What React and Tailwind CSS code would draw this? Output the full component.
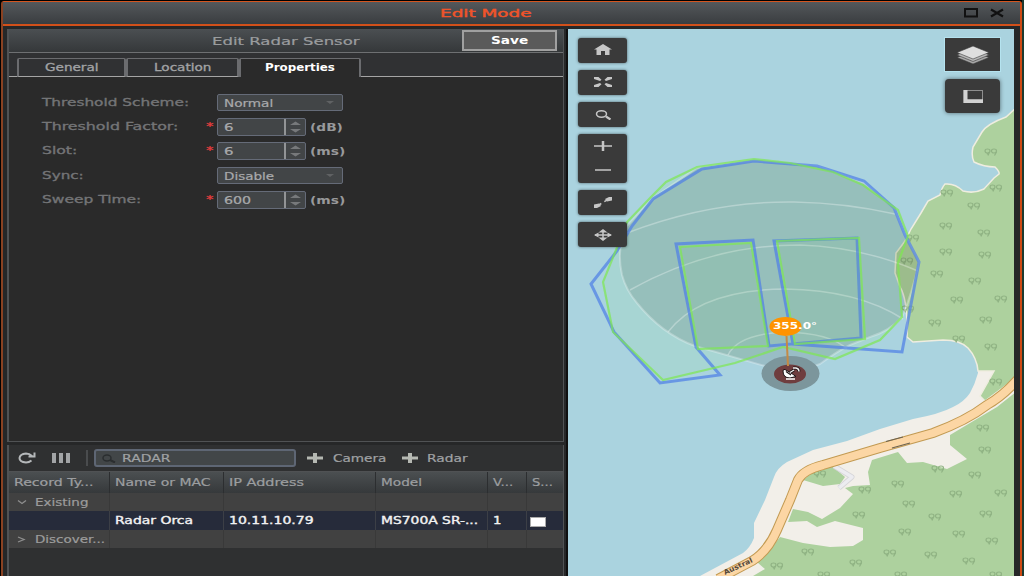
import React, { useLayoutEffect, useRef } from "react";

// Wide-set text: the label is stretched horizontally to fill the given width.
function T({ w, className = "", children }) {
  const ref = useRef(null);
  useLayoutEffect(() => {
    const el = ref.current;
    el.style.transform = `scaleX(${w / el.offsetWidth})`;
  }, [w, children]);
  return (
    <span className="inline-block shrink-0 whitespace-nowrap" style={{ width: w }}>
      <span ref={ref} className={`inline-block origin-left ${className}`}>{children}</span>
    </span>
  );
}

function Tab({ w, textW, active, children }) {
  return (
    <div
      style={{ width: w }}
      className={
        "flex h-[19px] items-center justify-center rounded-t-[2px] border-x-2 border-t border-[#6b6c6f] text-[10px] " +
        (active ? "bg-[#2a2a2a] pb-px text-white" : "border-b border-b-[#a5a5a5] bg-[#303133] text-[#a2a3a5]")
      }
    >
      <T w={textW} className={active ? "font-bold" : "[-webkit-text-stroke:0.300px]"}>{children}</T>
    </div>
  );
}

function Select({ value, w }) {
  return (
    <div className="flex h-[17px] w-[126px] items-center justify-between rounded-[2px] border border-[#656b78] bg-[#424547] pr-2 pl-[6px] text-[10px] text-[#a9aaac] [-webkit-text-stroke:0.200px]">
      <span className="flex translate-y-px"><T w={w}>{value}</T></span>
      <svg className="h-[3px] w-[8px]" viewBox="0 0 8 3"><path d="M0 0h8L4 3z" fill="#606264" /></svg>
    </div>
  );
}

function Spinner({ value, w, unit, unitW }) {
  return (
    <div className="flex items-center">
      <div className="flex h-[18px] w-[89px] rounded-[2px] border border-[#656b78] bg-[#424547] text-[10px] text-[#a9aaac] [-webkit-text-stroke:0.200px]">
        <div className="flex w-[68px] items-center border-r-2 border-[#929496] pt-px pl-[6px]"><T w={w}>{value}</T></div>
        <svg className="h-4 w-[19px]" viewBox="0 0 19 16">
          <path d="M4 6h11L9.500 2.500z M4 10h11L9.500 13.500z" fill="#77797b" />
        </svg>
      </div>
      <div className="ml-[4px] flex translate-y-px text-[10px] font-bold text-[#98999b]"><T w={unitW}>{unit}</T></div>
    </div>
  );
}

function Row({ label, w, required, children }) {
  return (
    <div className="flex h-[24.400px] items-center">
      <div className="flex w-[164px] pl-px text-[10px] text-[#747577] [-webkit-text-stroke:0.300px]"><T w={w}>{label}</T></div>
      <div className="flex h-[14px] w-[12px] text-[11px] leading-[14px] font-bold text-[#e03c3c]">{required && <span className="ml-px flex"><T w={8}>*</T></span>}</div>
      {children}
    </div>
  );
}

function MapButton({ h = "h-[25px]", children }) {
  return (
    <div className={`flex ${h} w-[49px] flex-col items-center justify-center rounded-[3px] bg-[#3a3a3a] shadow-[0_0_3px_rgba(0,0,0,0.550)]`}>
      {children}
    </div>
  );
}

const trees = [
  [991, 152], [947, 193], [996, 188], [974, 206], [946, 226], [984, 233], [913, 238], [946, 252], [985, 255],
  [907, 261], [937, 274], [975, 281], [957, 300], [1001, 299], [935, 323], [986, 320], [959, 339], [991, 347],
  [908, 309], [996, 382], [983, 428], [985, 450], [975, 475], [938, 469], [1001, 493], [956, 494], [898, 484],
  [865, 490], [909, 504], [859, 515], [935, 517], [986, 514], [905, 532], [959, 534], [992, 541], [808, 552],
  [890, 553], [931, 555], [969, 561], [856, 563], [777, 566], [824, 575], [996, 575], [901, 575], [820, 474],
];

const road = "M1018 379 Q1003 396 987 405 Q966 421 933 433 L880 448 L823 465 Q803 470 798 480 L790 500 L777 530 Q768 551 752 561 L718 579";
const greenZone = "754,159 697,167 666,182 651,197 627,222 616,250 603,282 613,332 663,380 735,363 783,347 835,359 880,340 902,317 898,263 908,236 898,210 863,185 833,172 790,163";

function MapView() {
  return (
    <svg className="block h-[547px] w-[446px]" viewBox="568 29 446 547">
      <defs>
        <g id="tree" fill="none" stroke="#90b384" strokeWidth="1.200">
          <ellipse cx="-3.500" cy="-1" rx="2.500" ry="2" />
          <path d="M-3.500 1v1.500M-1.500 0l-1.500 3.500M5.500 0L3.500 3.500" />
          <ellipse cx="3" cy="-1" rx="2.500" ry="2" />
        </g>
      </defs>
      <rect x="568" y="29" width="446" height="547" fill="#aad3df" />
      <path
        d="M1016 365H978L978 373Q975 384 970 393Q964 402 953 407Q940 414 913 419L880 429L847 441L813 450L787 462Q777 468 774 477L765 500L754 523V538Q750 548 743 553L700 576H1016Z"
        fill="#f2efe9"
      />
      <path
        d="M1016 108L1006 117Q987 124 982 132L973 147Q971 156 974 162Q984 167 995 167Q1000 172 999 174L994 178L984 189Q974 194 963 191Q955 183 945 184Q942 187 940 195L928 201L921 213L911 229L905 241L896 253L895 273L900 287Q908 300 907 337L913 342L943 340Q960 340 968 348Q977 358 978 371H994L980 396L985 401L1016 378Z"
        fill="#add19e" stroke="#efede0" strokeWidth="1.500"
      />
      <path
        d="M1016 392L997 407L970 423L950 435V445L967 459L947 469L923 462L907 463L898 452L872 460L868 472L870 485L853 486L845 488L853 494L840 508L822 519L808 512L793 509L788 522L807 521L817 527L835 521L863 528V540L853 546L830 547L803 543L780 537L770 550L757 562L765 569L753 576H1016Z"
        fill="#add19e"
      />
      <path d="M803 480L816 470L832 466L845 477L840 484L823 486Z" fill="#add19e" />
      {trees.map(([x, y]) => <use key={x + "-" + y} href="#tree" x={x} y={y} />)}
      <path d="M834 466L852 477L839 488" fill="none" stroke="#d5d5d8" strokeWidth="5" strokeLinejoin="round" />
      <path d="M834 466L852 477L839 488" fill="none" stroke="#ececf0" strokeWidth="3.500" strokeLinejoin="round" />
      <path d={road} fill="none" stroke="#c29a52" strokeWidth="10" />
      <path d={road} fill="none" stroke="#fcd6a4" strokeWidth="8" />
      <path d="M886 441.500L903 437M892 448L910 443" stroke="#6b6250" strokeWidth="1.200" />
      <text transform="translate(725 575) rotate(-25)" fontSize="7" textLength="31" lengthAdjust="spacingAndGlyphs" fontWeight="bold" fontFamily="DejaVu Sans" fill="#54483a">Austral</text>

      <polygon points={greenZone} fill="#90ee70" fillOpacity=".1" />
      <path
        d="M754 160L697 168L653 198L627 226Q616 248 622 275Q626 290 637 303Q662 334 695 346L765 366L790 374L820 364Q836 352 850 345L870 337Q890 331 902 317Q912 294 919 262L905 235L894 208L864 183L817 166Z"
        fill="#101000" fillOpacity=".11" stroke="#ffffff" strokeOpacity=".28" strokeWidth="2"
      />
      <g fill="none" stroke="#ffffff" strokeOpacity=".3" strokeWidth="1.500">
        <path d="M627 233Q710 201 794 202Q846 203 895 214" />
        <path d="M630 290Q710 245 800 245Q862 247 918 271" />
        <path d="M668 332Q700 290 785 289Q858 290 903 319" />
        <path d="M728 355Q738 334 785 332Q830 333 847 349" />
      </g>
      <g fill="none" stroke="#4f7fe6" strokeOpacity=".72" strokeWidth="3">
        <path d="M754 161L702 169L653 199L632 226L617 251L591 284L614 332L660 383L720 375L696 347L676 244L753 240L769 346L861 338L857 238L774 241L793 344L902 352L919 262L905 235L894 208L864 181L817 166Z" />
      </g>
      <g fill="none" stroke="#7ee850" strokeOpacity=".7" strokeWidth="2.200">
        <polygon points={greenZone} />
        <polygon points="680,247 751,243 768,346 698,349" fill="#70c860" fillOpacity=".09" />
        <polygon points="777,241 859,238 865,339 795,344" fill="#70c860" fillOpacity=".09" />
      </g>

      <ellipse cx="790.500" cy="373.500" rx="29" ry="17.500" fill="#7c969c" />
      <ellipse cx="790" cy="374" rx="16" ry="9.500" fill="#6f3d3e" />
      <path d="M786.500 336L788 366" stroke="#c48a45" strokeWidth="2" />
      <path d="M783 371Q783 378 790 378L796 376.500L791 373L785 369.500Q783 369 783 371Z" fill="#fff" stroke="#1c1416" strokeWidth="1" />
      <path d="M786 371.500L791 375" stroke="#1c1416" strokeWidth="1.200" />
      <path d="M790 372.500L794 370M793 368H796Q799 368.500 799 371.500" fill="none" stroke="#1c1416" strokeWidth="3" />
      <path d="M790 372.500L794 370M793 368H796Q799 368.500 799 371.500" fill="none" stroke="#f4f0f0" strokeWidth="1.300" />
      <path d="M786 379H795" stroke="#fff" strokeWidth="1.500" />
      <ellipse cx="785.500" cy="326.500" rx="16" ry="9.500" fill="#ff9300" />
      <text x="773" y="328.500" textLength="44" lengthAdjust="spacingAndGlyphs" fontSize="9" fontWeight="bold" fontFamily="DejaVu Sans" fill="#fff">355.0°</text>
    </svg>
  );
}

const cols = ["w-[101px]", "w-[114px]", "w-[152px]", "w-[112px]", "w-[39px]", "w-[37px]"];

function GridRow({ className, cell, cells }) {
  return (
    <div className={`flex ${className}`}>
      {cols.map((c, i) => (
        <div key={i} className={`flex shrink-0 items-center pl-[5px] ${c} ${i < 5 ? "border-r " + cell : ""}`}>{cells[i]}</div>
      ))}
    </div>
  );
}

export default function App() {
  return (
    <div className="flex h-[576px] w-[1024px] overflow-hidden bg-[#1c3a30] font-['DejaVu_Sans',sans-serif]">
      <div className="flex w-[1022px] flex-col border-l border-black bg-black pt-px">
        <div className="flex h-[575px] flex-col rounded-t-[3px] border-t border-r-2 border-l-2 border-t-[#d4551f] border-r-[#cf4a14] border-l-[#8a4222] bg-[#262728]">
          <header className="flex h-[24px] shrink-0 items-center border-b-2 border-[#d2501a] bg-linear-to-b from-[#54585b] to-[#3a3d40]">
            <div className="flex grow translate-y-px justify-center pl-[6px] text-[11px] text-[#f0542a]"><T w={92} className="[-webkit-text-stroke:0.400px]">Edit Mode</T></div>
            <svg className="mr-[15px] h-[12px] w-[42px]" viewBox="0 0 42 12" fill="none" stroke="#111">
              <rect x="2" y="2" width="12" height="7.500" strokeWidth="2" />
              <path d="M28 2.500L40 9.500M40 2.500L28 9.500" strokeWidth="2.200" />
            </svg>
          </header>
          <div className="flex grow pt-[3px] pl-[4px]">
            <div className="flex w-[557px] flex-col gap-[3px]">
              <section className="flex h-[413px] flex-col border-x border-b border-l-2 border-[#505254] bg-[#2a2a2a]">
                <div className="flex h-[24px] shrink-0 items-center border-b border-[#6e7072] bg-linear-to-b from-[#4b4f52] to-[#35383a]">
                  <div className="flex w-[453px] pt-[3px] pl-[203px] text-[11px] text-[#9a9c9e] [-webkit-text-stroke:0.200px]"><T w={147}>Edit Radar Sensor</T></div>
                  <div className="flex h-[21px] w-[95px] items-center justify-center border-2 border-[#a0a0a0] bg-[#5a5a5a] text-[10px] font-bold text-white"><T w={37}>Save</T></div>
                </div>
                <div className="flex h-[24px] shrink-0 items-end bg-[#303133]">
                  <div className="h-px w-[8px] bg-[#a5a5a5]" />
                  <Tab w={109} textW={53}>General</Tab>
                  <Tab w={113} textW={57}>Location</Tab>
                  <Tab w={122} textW={70} active>Properties</Tab>
                  <div className="h-px grow bg-[#a5a5a5]" />
                </div>
                <div className="flex flex-col pt-[13px] pl-[32px]">
                  <Row label="Threshold Scheme:" w={147}><Select value="Normal" w={49} /></Row>
                  <Row label="Threshold Factor:" w={136} required><Spinner value="6" w={9} unit="(dB)" unitW={33} /></Row>
                  <Row label="Slot:" w={36} required><Spinner value="6" w={9} unit="(ms)" unitW={36} /></Row>
                  <Row label="Sync:" w={41}><Select value="Disable" w={50} /></Row>
                  <Row label="Sweep Time:" w={99} required><Spinner value="600" w={27} unit="(ms)" unitW={36} /></Row>
                </div>
              </section>
              <section className="flex grow flex-col border-x border-l-2 border-[#505254] bg-[#2f3031] text-[10px]">
                <div className="flex h-[26px] items-center text-[#a0a2a4] [-webkit-text-stroke:0.200px]">
                  <svg className="ml-[9px] h-[12px] w-[18px]" viewBox="0 0 18 12" fill="none" stroke="#b5b8ba" strokeWidth="2">
                    <path d="M13.500 8.500Q11 10.500 8 10.500Q1.500 10 1.500 6Q2 2 8 1.500Q11.500 1.500 14 4M16.500 .500V4.500H10.500" />
                  </svg>
                  <svg className="ml-[16px] h-[10px] w-[19px]" viewBox="0 0 19 10" fill="#a2a4a6"><path d="M0 0h4v10h-4zM7 0h4v10h-4zM14 0h4v10h-4z" /></svg>
                  <div className="ml-[15px] h-[16px] w-[2px] bg-[#4a4c4e]" />
                  <div className="ml-[6px] flex h-[18px] w-[202px] items-center rounded-[3px] border-2 border-[#5e6674] bg-[#424648] pl-[6px]">
                    <svg className="h-[9px] w-[14px]" viewBox="0 0 14 9" fill="none" stroke="#2b2e30" strokeWidth="1.500"><ellipse cx="5" cy="4" rx="4" ry="3" /><path d="M8 6L13 8.500" strokeWidth="2" /></svg>
                    <span className="ml-[6px] flex"><T w={49}>RADAR</T></span>
                  </div>
                  <svg className="ml-[11px] h-[10px] w-[16px]" viewBox="0 0 16 10" fill="#b5b8b2"><path d="M6 0h4v3.500h6v3h-6V10H6V6.500H0v-3h6z" /></svg>
                  <span className="ml-[10px] flex"><T w={53}>Camera</T></span>
                  <svg className="ml-[16px] h-[10px] w-[16px]" viewBox="0 0 16 10" fill="#b5b8b2"><path d="M6 0h4v3.500h6v3h-6V10H6V6.500H0v-3h6z" /></svg>
                  <span className="ml-[9px] flex"><T w={40}>Radar</T></span>
                </div>
                <GridRow
                  className="h-[22px] border-t border-[#505254] bg-linear-to-b from-[#4b4f51] to-[#36393b] text-[#9c9ea0] [-webkit-text-stroke:0.200px]"
                  cell="border-[#2c2e30]"
                  cells={[<T w={79}>Record Ty...</T>, <T w={95}>Name or MAC</T>, <T w={75}>IP Address</T>, <T w={41}>Model</T>, <T w={20}>V...</T>, <T w={21}>S...</T>]}
                />
                <GridRow
                  className="h-[18px] bg-[#414141] text-[#9c9c9c] [-webkit-text-stroke:0.200px]"
                  cell="border-[#393939]"
                  cells={[<><svg className="ml-[3px] h-[6px] w-[10px]" viewBox="0 0 10 6" fill="none" stroke="#8e8e8e" strokeWidth="1.300"><path d="M1 1.500L5 4.500L9 1.500" /></svg><span className="ml-[8px] flex"><T w={54}>Existing</T></span></>]}
                />
                <GridRow
                  className="h-[19px] bg-[#262b3a] text-[#f2f2f2] [-webkit-text-stroke:0.350px]"
                  cell="border-[#3c3f46]"
                  cells={["", <T w={78}>Radar Orca</T>, <T w={84}>10.11.10.79</T>, <T w={97}>MS700A SR-...</T>, <T w={8}>1</T>, <span className="-ml-[2px] mt-[2px] h-[10px] w-[16px] border border-[#aaa] bg-white" />]}
                />
                <GridRow
                  className="h-[18px] bg-[#414141] text-[#9c9c9c] [-webkit-text-stroke:0.200px]"
                  cell="border-[#393939]"
                  cells={[<><svg className="ml-[3px] h-[7px] w-[10px]" viewBox="0 0 10 7" fill="none" stroke="#8e8e8e" strokeWidth="1.300"><path d="M1 1L7 3.500L1 6" /></svg><span className="ml-[8px] flex"><T w={70}>Discover...</T></span></>]}
                />
              </section>
            </div>
            <main className="relative ml-[4px] h-[547px] w-[446px] shadow-[-2px_0_0_#101010]">
              <MapView />
              <div className="absolute top-[9px] left-[10px] flex flex-col gap-[7px]">
                <MapButton>
                  <svg className="h-[11px] w-[18px] -translate-y-px" viewBox="0 0 18 11" fill="#c6c6c6"><path d="M9 0L18 5.500H15.500V11H11V7H7V11H2.500V5.500H0Z" /></svg>
                </MapButton>
                <MapButton>
                  <svg className="h-[10px] w-[18px] -translate-y-px" viewBox="0 0 18 10" fill="#c6c6c6"><path d="M0 0H4.500L7.500 2.800L6 4L0 2ZM18 0H13.500L10.500 2.800L12 4L18 2ZM0 10H4.500L7.500 7.200L6 6L0 8ZM18 10H13.500L10.500 7.200L12 6L18 8Z" /></svg>
                </MapButton>
                <MapButton>
                  <svg className="h-[10px] w-[16px]" viewBox="0 0 16 10" fill="none" stroke="#c6c6c6" strokeWidth="1.500"><ellipse cx="6.500" cy="4" rx="5" ry="3.200" /><path d="M11 6.500L15.500 9.500" strokeWidth="2.200" /></svg>
                </MapButton>
                <MapButton h="h-[49px]">
                  <svg className="h-[34px] w-[18px] -translate-y-px" viewBox="0 0 18 34" fill="none" stroke="#c6c6c6"><path d="M0 5H18M1 29H17" strokeWidth="1.300" /><path d="M9 0V10" strokeWidth="2.500" /></svg>
                </MapButton>
                <MapButton>
                  <svg className="h-[11px] w-[18px]" viewBox="0 0 18 11" fill="#c6c6c6"><path d="M3 9L15 2" stroke="#c6c6c6" strokeDasharray="5 3.500" strokeWidth="1.500" /><path d="M0 7.500L5 6.500L7 9L3 11H0zM18 3.500L13 4.500L11 2L15 0H18z" /></svg>
                </MapButton>
                <MapButton>
                  <svg className="h-[12px] w-[18px]" viewBox="0 0 18 12" stroke="#c6c6c6" fill="#c6c6c6"><path d="M9 1V11M1 6H17" strokeWidth="1.500" /><path d="M9 0l4.500 3.500h-9zM9 12l4.500-3.500h-9zM0 6l4.500-2.500v5zM18 6l-4.500-2.500v5z" stroke="none" /></svg>
                </MapButton>
              </div>
              <div className="absolute top-[9px] right-[14px] flex flex-col gap-[8px]">
                <div className="flex h-[33px] w-[55px] items-center justify-center bg-[#3a3a3a] shadow-[0_0_0_1px_#b5e3ef]">
                  <svg className="h-[18px] w-[32px]" viewBox="0 0 32 18"><path d="M0 11.500L16 18L32 11.500L26 9H6Z" fill="#a8a8a8" stroke="#3a3a3a" strokeWidth=".6" /><path d="M0 9L16 15.500L32 9L26 6H6Z" fill="#b8b8b8" stroke="#3a3a3a" strokeWidth=".6" /><path d="M0 6.500L16 0L32 6.500L16 13Z" fill="#dedede" stroke="#3a3a3a" strokeWidth=".6" /></svg>
                </div>
                <div className="flex h-[34px] w-[55px] items-center justify-center rounded-[4px] bg-[#3a3a3a] shadow-[0_0_4px_rgba(0,0,0,0.500)]">
                  <svg className="h-[13px] w-[20px]" viewBox="0 0 20 13" fill="none"><rect x="1" y=".5" width="18.500" height="12" stroke="#8e8e8e" /><path d="M2.500 0V11.200H20" stroke="#d2d2d2" strokeWidth="4" /></svg>
                </div>
              </div>
            </main>
          </div>
        </div>
      </div>
    </div>
  );
}
